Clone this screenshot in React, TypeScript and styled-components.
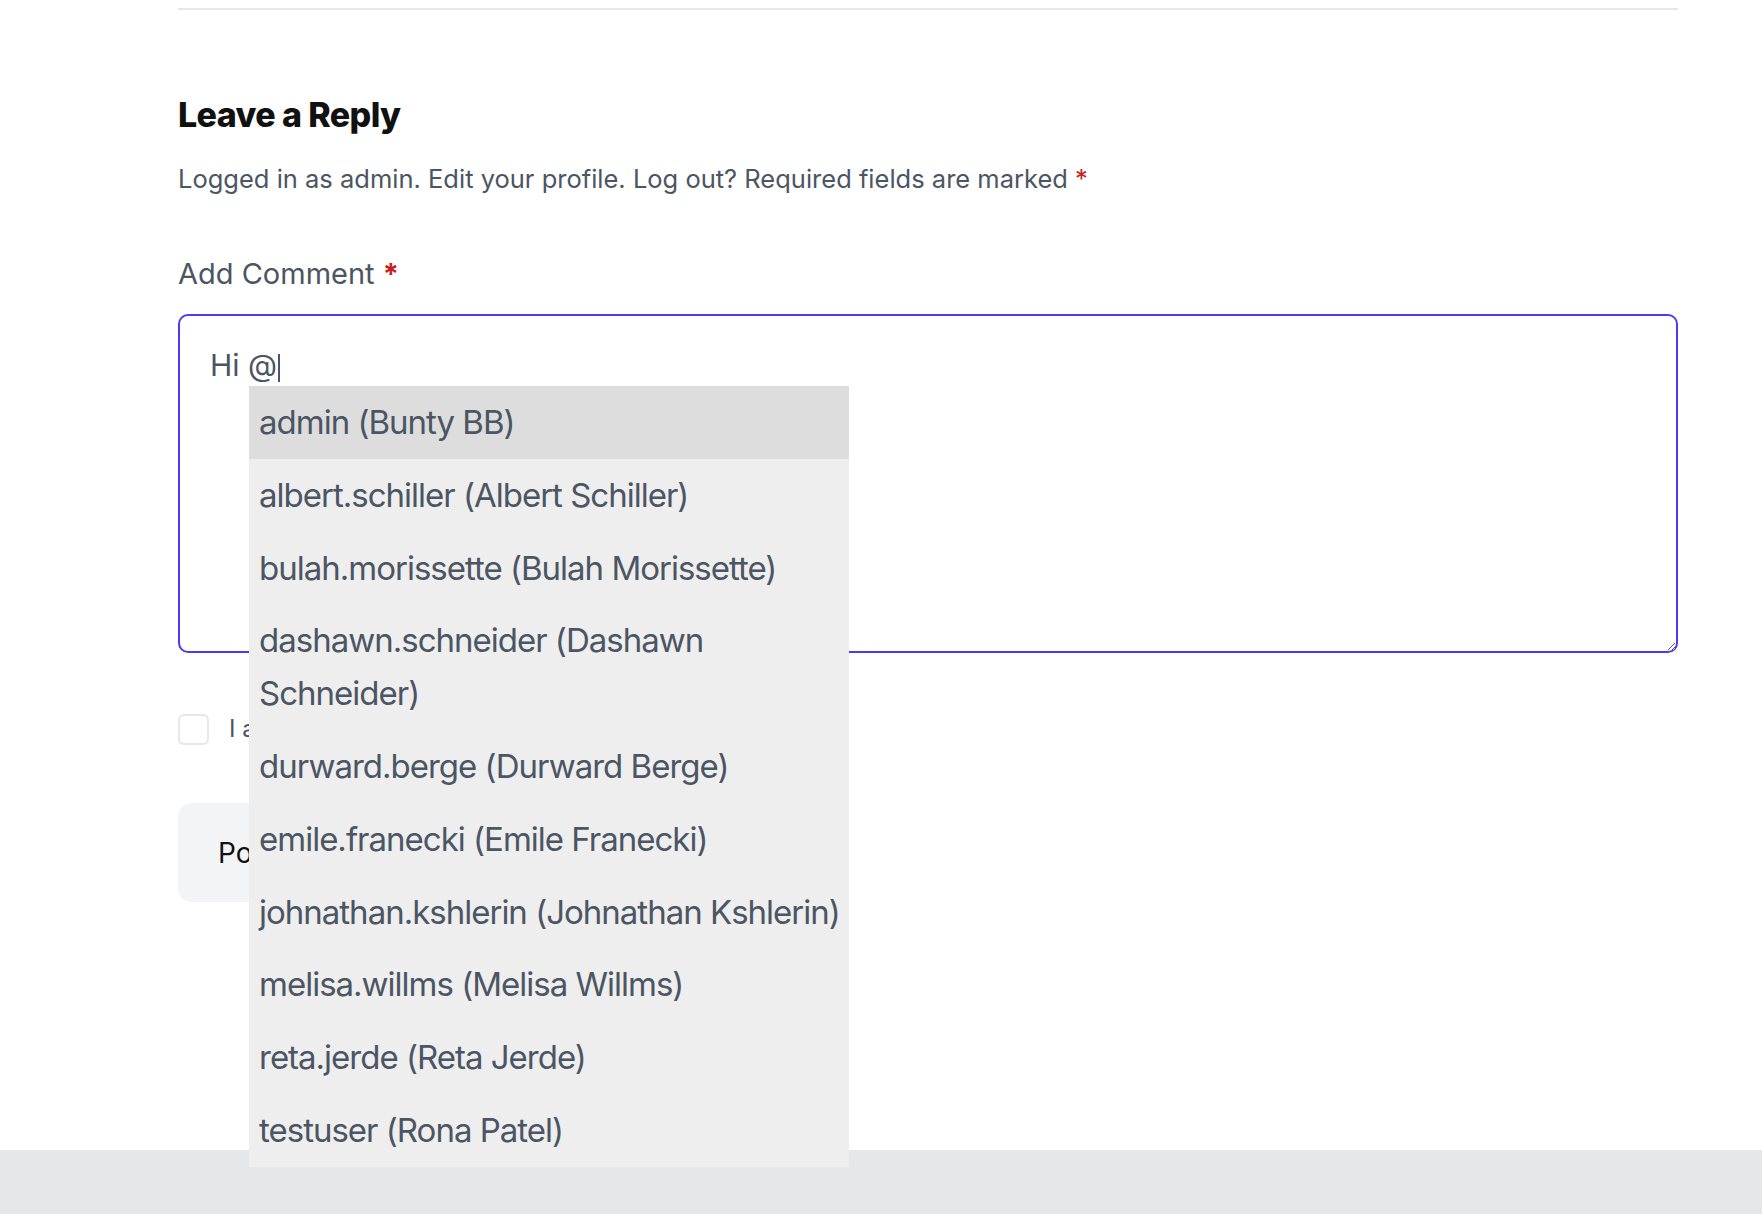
import React from "react";
import styled, { createGlobalStyle } from "styled-components";

const GlobalStyle = createGlobalStyle`
  html, body {
    margin: 0;
    padding: 0;
    background: #ffffff;
  }
  body {
    font-family: Inter, "Noto Sans", "Liberation Sans", sans-serif;
    color: #4b5563;
  }
  * { box-sizing: border-box; }
`;

const Page = styled.div`
  min-height: 100vh;
  display: flex;
  flex-direction: column;
`;

const Main = styled.main`
  flex: 1;
  padding: 8px 84px 0 178px;
`;

const Divider = styled.hr`
  margin: 0;
  border: none;
  height: 2px;
  background: #e5e7eb;
`;

const ReplySection = styled.section`
  display: flex;
  flex-direction: column;
`;

const Heading = styled.h3`
  margin: 85px 0 0;
  font-family: Inter, "Noto Sans", sans-serif;
  font-weight: 800;
  font-size: 34px;
  line-height: 40px;
  letter-spacing: -0.6px;
  color: #111111;
`;

const Notes = styled.p`
  margin: 26px 0 0;
  font-size: 25.5px;
  line-height: 36px;
  color: #4b5563;
`;

const Required = styled.span<{ $bold?: boolean }>`
  color: #c81e1e;
  font-weight: ${(p) => (p.$bold ? 700 : 400)};
`;

const Label = styled.label`
  display: block;
  margin-top: 57px;
  font-size: 29px;
  line-height: 40px;
  color: #4b5563;
`;

const Field = styled.div`
  position: relative;
  margin-top: 20px;
`;

const CommentBox = styled.textarea`
  display: block;
  width: 100%;
  height: 339px;
  padding: 25px 30px;
  border: 2px solid #4f39f6;
  border-radius: 10px;
  font-family: Inter, "Noto Sans", sans-serif;
  font-size: 30px;
  line-height: 48px;
  color: #4b5563;
  caret-color: transparent;
  background: #ffffff;
  resize: vertical;
  outline: none;
`;

/* text cursor painted after the "@" trigger while the mention list is open */
const Caret = styled.span`
  position: absolute;
  left: 100px;
  top: 40px;
  width: 2px;
  height: 28px;
  background: #4b5563;
  pointer-events: none;
`;

const Suggestions = styled.ul`
  position: absolute;
  left: 71px;
  top: 72px;
  z-index: 10;
  width: 600px;
  margin: 0;
  padding: 0;
  list-style: none;
  background: #eeeeee;
`;

const Suggestion = styled.li<{ $active?: boolean }>`
  padding: 10px 4px 10px 10px;
  font-size: 33px;
  line-height: 52.8px;
  letter-spacing: -1px;
  color: #4b5563;
  background: ${(p) => (p.$active ? "#dddddd" : "transparent")};
  cursor: pointer;
`;

const ConsentRow = styled.label`
  display: flex;
  align-items: center;
  gap: 20px;
  margin-top: 60px;
  font-size: 24px;
  line-height: 32px;
  color: #4b5563;
`;

const Checkbox = styled.span`
  width: 31px;
  height: 31px;
  border: 2px solid #e5e7eb;
  border-radius: 6px;
  background: #ffffff;
  flex: none;
`;

const SubmitButton = styled.button`
  align-self: flex-start;
  margin-top: 58px;
  height: 99px;
  padding: 0 40px;
  border: none;
  border-radius: 14px;
  background: #f3f4f6;
  font-family: Inter, "Noto Sans", sans-serif;
  font-size: 28px;
  color: #111111;
  cursor: pointer;
`;

const Footer = styled.footer`
  height: 64px;
  background: #e5e7eb;
`;

const users = [
  "admin (Bunty BB)",
  "albert.schiller (Albert Schiller)",
  "bulah.morissette (Bulah Morissette)",
  "dashawn.schneider (Dashawn Schneider)",
  "durward.berge (Durward Berge)",
  "emile.franecki (Emile Franecki)",
  "johnathan.kshlerin (Johnathan Kshlerin)",
  "melisa.willms (Melisa Willms)",
  "reta.jerde (Reta Jerde)",
  "testuser (Rona Patel)",
];

export default function App() {
  return (
    <Page>
      <GlobalStyle />
      <Main>
        <Divider />
        <ReplySection>
          <Heading>Leave a Reply</Heading>
          <Notes>
            Logged in as admin. Edit your profile. Log out? Required fields are marked{" "}
            <Required>*</Required>
          </Notes>
          <Label htmlFor="comment">
            Add Comment <Required $bold>*</Required>
          </Label>
          <Field>
            <CommentBox id="comment" defaultValue="Hi @" autoFocus />
            <Caret />
            <Suggestions>
              {users.map((u, i) => (
                <Suggestion key={u} $active={i === 0}>
                  {u}
                </Suggestion>
              ))}
            </Suggestions>
          </Field>
          <ConsentRow>
            <Checkbox />
            I agree to the terms
          </ConsentRow>
          <SubmitButton>Post Comment</SubmitButton>
        </ReplySection>
      </Main>
      <Footer />
    </Page>
  );
}
